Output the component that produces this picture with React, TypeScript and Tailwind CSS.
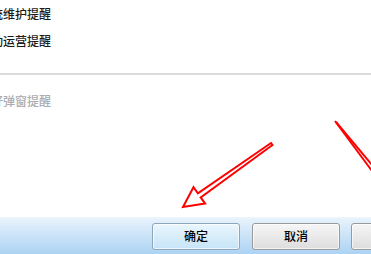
import React from "react";

const font = { fontFamily: '"Noto Sans CJK SC", "Noto Sans", sans-serif' };

function Row({ lead, text, muted, className }: { lead: string; text: string; muted?: boolean; className?: string }) {
	return (
		<div className={`flex items-center text-[12px] font-medium leading-none ${muted ? "text-[#a9acb0]" : "text-[#1b1b1b]"} ${className ?? ""}`}>
			<span className="-ml-[9px]">{lead}</span>
			<span>{text}</span>
		</div>
	);
}

export default function App() {
	return (
		<div className="relative flex h-[254px] w-[371px] flex-col overflow-hidden bg-white" style={font}>
			{/* options */}
			<Row lead="统" text="维护提醒" className="h-[27px]" />
			<Row lead="动" text="运营提醒" className="h-[28px]" />

			<div className="mt-[18px] h-[2px] w-full bg-[#dcdcdc]" />

			<Row lead="好" text="弹窗提醒" muted className="mt-[13px] h-[26px]" />

			<div className="flex-1" />

			{/* footer bar */}
			<div className="flex h-[37px] items-center border-t border-[#eef6fd] bg-gradient-to-b from-[#e8f3fc] to-[#acd3f3] pl-[152px]">
				<button className="flex h-[27px] w-[88px] shrink-0 items-center justify-center rounded-[3px] border border-[#8fa6b8] bg-gradient-to-b from-[#eaf6fd] to-[#c6e4f7] text-[12px] font-medium text-black shadow-[inset_0_0_0_1px_#ffffffaa]">
					确定
				</button>
				<button className="ml-[12px] flex h-[27px] w-[88px] shrink-0 items-center justify-center rounded-[3px] border border-[#9a9a9a] bg-gradient-to-b from-[#f6f6f6] to-[#dddddd] text-[12px] font-medium text-black shadow-[inset_0_0_0_1px_#ffffffaa]">
					取消
				</button>
				<button className="ml-[11px] h-[27px] w-[88px] shrink-0 rounded-[3px] border border-[#9a9a9a] bg-gradient-to-b from-[#f6f6f6] to-[#dddddd] shadow-[inset_0_0_0_1px_#ffffffaa]" />
			</div>

			{/* annotation arrows */}
			<svg className="pointer-events-none absolute left-0 top-0" width="371" height="254" viewBox="0 0 371 254">
				<polygon
					points="272.5,145 200.7,197.4 205.1,203.6 183,207 193.5,187.2 197.9,193.4 271,143"
					fill="none"
					stroke="#ff0000"
					strokeWidth="2"
					strokeLinejoin="miter"
				/>
				<polyline points="335,121 372,171" fill="none" stroke="#ff0000" strokeWidth="2" />
				<polyline points="336,122 372,165" fill="none" stroke="#ff0000" strokeWidth="2" />
			</svg>
		</div>
	);
}
